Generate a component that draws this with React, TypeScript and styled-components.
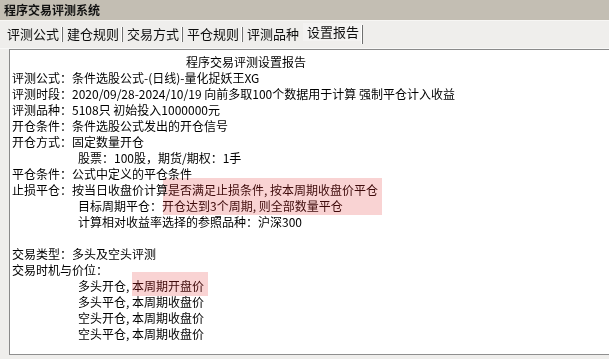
import React from "react";
import styled, { createGlobalStyle } from "styled-components";

const GlobalStyle = createGlobalStyle`
  html, body {
    margin: 0;
    padding: 0;
    background: #efeeec;
  }
  body {
    font-family: "Noto Sans CJK SC", "Liberation Sans", sans-serif;
    color: #000;
  }
`;

const Window = styled.div`
  width: 609px;
  height: 359px;
  overflow: hidden;
  display: flex;
  flex-direction: column;
  background: #efeeec;
`;

const TitleBar = styled.div`
  height: 21px;
  line-height: 20px;
  padding-left: 4px;
  background: #c3beb3;
  border-bottom: 1px solid #f7f6f4;
  box-sizing: border-box;
  font-size: 12px;
  font-weight: 700;
  color: #111;
`;

const TabStrip = styled.div`
  height: 28px;
  display: flex;
  align-items: flex-start;
  padding: 4px 0 0 3px;
  box-sizing: border-box;
  border-bottom: 1px solid #f8f8f7;
`;

const Tab = styled.div<{ $active?: boolean; $noSep?: boolean }>`
  position: relative;
  width: 60px;
  height: 18px;
  box-sizing: border-box;
  padding: 0 3px 0 4px;
  font-size: 13px;
  line-height: 18px;
  color: #0d0d0d;
  white-space: nowrap;
  margin-top: ${(p) => (p.$active ? "-2px" : "0")};
  background: ${(p) => (p.$active ? "#f3f2f1" : "transparent")};

  &::after {
    content: "";
    display: ${(p) => (p.$noSep ? "none" : "block")};
    position: absolute;
    right: 0;
    top: 2px;
    height: ${(p) => (p.$active ? "19px" : "15px")};
    width: 1px;
    background: #6f6f6f;
    box-shadow: -1px 0 0 #ffffff;
  }
`;

const Panel = styled.div`
  position: relative;
  margin-left: 9px;
  height: 306px;
  box-sizing: border-box;
  background: #ffffff;
  border-top: 1px solid #8a8a8a;
  border-left: 1px solid #8a8a8a;
  border-bottom: 1px solid #8f8f8f;
  padding: 4px 0 0 2px;
`;

const Line = styled.div<{ $indent?: number }>`
  height: 16px;
  line-height: 16px;
  font-size: 12px;
  padding-left: ${(p) => p.$indent ?? 0}px;
  white-space: nowrap;
  color: #000;
`;

const Marked = styled.span`
  color: #3f0b0b;
`;

const Highlight = styled.div`
  position: absolute;
  background: #f9d3d3;
  mix-blend-mode: multiply;
  pointer-events: none;
`;

const tabs = ["评测公式", "建仓规则", "交易方式", "平仓规则", "评测品种", "设置报告"];

export default function App() {
  const active = 5;
  return (
    <>
      <GlobalStyle />
      <Window>
        <TitleBar>程序交易评测系统</TitleBar>
        <TabStrip>
          {tabs.map((t, i) => (
            <Tab key={t} $active={i === active} $noSep={i === active - 1}>
              {t}
            </Tab>
          ))}
        </TabStrip>
        <Panel>
          <Line $indent={174}>程序交易评测设置报告</Line>
          <Line>评测公式：条件选股公式-(日线)-量化捉妖王XG</Line>
          <Line>评测时段：2020/09/28-2024/10/19 向前多取100个数据用于计算 强制平仓计入收益</Line>
          <Line>评测品种：5108只 初始投入1000000元</Line>
          <Line>开仓条件：条件选股公式发出的开仓信号</Line>
          <Line>开仓方式：固定数量开仓</Line>
          <Line $indent={66}>股票：100股，期货/期权：1手</Line>
          <Line>平仓条件：公式中定义的平仓条件</Line>
          <Line>
            止损平仓：按当日收盘价计算<Marked>是否满足止损条件, 按本周期收盘价平仓</Marked>
          </Line>
          <Line $indent={66}>
            目标周期平仓：<Marked>开仓达到3个周期, 则全部数量平仓</Marked>
          </Line>
          <Line $indent={66}>计算相对收益率选择的参照品种：沪深300</Line>
          <Line />
          <Line>交易类型：多头及空头评测</Line>
          <Line>交易时机与价位：</Line>
          <Line $indent={66}>
            多头开仓, <Marked>本周期开盘价</Marked>
          </Line>
          <Line $indent={66}>多头平仓, 本周期收盘价</Line>
          <Line $indent={66}>空头开仓, 本周期收盘价</Line>
          <Line $indent={66}>空头平仓, 本周期收盘价</Line>

          <Highlight style={{ left: 153, top: 128, width: 219, height: 37 }} />
          <Highlight style={{ left: 122, top: 222, width: 76, height: 24 }} />
        </Panel>
      </Window>
    </>
  );
}
